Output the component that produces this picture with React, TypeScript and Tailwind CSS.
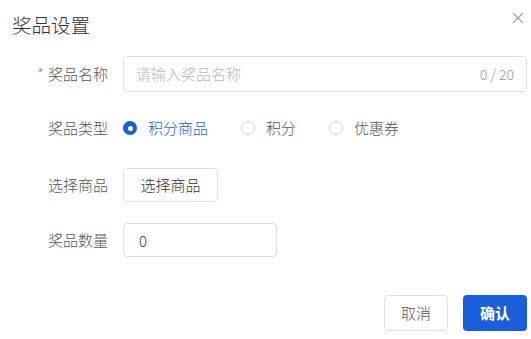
import { useState } from 'react';

const font = { fontFamily: '"Noto Sans CJK SC", "Noto Sans", sans-serif' };

const types = ['积分商品', '积分', '优惠券'];

const Radio = ({ label, checked, onClick }: { label: string; checked: boolean; onClick: () => void }) => (
    <button className="flex items-center mr-[33px]" onClick={onClick}>
        {checked ? (
            <span className="w-[14px] h-[14px] rounded-full bg-[#1a5fd8] flex items-center justify-center">
                <span className="w-[5px] h-[5px] rounded-full bg-white" />
            </span>
        ) : (
            <span className="w-[14px] h-[14px] rounded-full border border-[#cfd3dc] bg-white" />
        )}
        <span className={`ml-[11px] text-[15px] ${checked ? 'text-[#1a5fd8]' : 'text-[#555]'}`}>{label}</span>
    </button>
);

export default function App() {
    const [type, setType] = useState(0);
    return (
        <div className="w-[531px] h-[339px] bg-white relative font-light" style={font}>
            {/* Header */}
            <div className="flex items-center justify-between pl-[12px] pr-[7px] h-[50px]">
                <h1 className="text-[19.5px] text-[#333] leading-none">奖品设置</h1>
                <svg width="12" height="12" viewBox="0 0 12 12" className="mb-[14px]">
                    <path d="M1 1L11 11M11 1L1 11" stroke="#a0a0a0" strokeWidth="1.1" />
                </svg>
            </div>

            {/* Form */}
            <div className="pl-[12px] pr-[4px] mt-[6px]">
                <div className="flex items-center h-[36px]">
                    <label className="w-[98px] pr-[2px] text-right text-[15px] text-[#555]">
                        <span className="text-[#f56c6c] mr-[4px]">*</span>奖品名称
                    </label>
                    <div className="ml-[13px] flex-1 h-[36px] border border-[#dcdfe6] rounded-[4px] flex items-center px-[12px]">
                        <input className="flex-1 outline-none text-[15px] text-[#333] placeholder:text-[#b8b8b8]" placeholder="请输入奖品名称" />
                        <span className="text-[14px] text-[#999]">0 / 20</span>
                    </div>
                </div>

                <div className="flex items-center h-[36px] mt-[18px]">
                    <label className="w-[98px] pr-[2px] text-right text-[15px] text-[#555]">奖品类型</label>
                    <div className="ml-[13px] flex items-center">
                        {types.map((t, i) => (
                            <Radio key={t} label={t} checked={type === i} onClick={() => setType(i)} />
                        ))}
                    </div>
                </div>

                <div className="flex items-center h-[34px] mt-[22px]">
                    <label className="w-[98px] pr-[2px] text-right text-[15px] text-[#555]">选择商品</label>
                    <button className="ml-[13px] w-[95px] h-[34px] border border-[#dcdfe6] rounded-[4px] text-[15px] text-[#333]">
                        选择商品
                    </button>
                </div>

                <div className="flex items-center h-[34px] mt-[21px]">
                    <label className="w-[98px] pr-[2px] text-right text-[15px] text-[#555]">奖品数量</label>
                    <input
                        className="ml-[13px] w-[154px] h-[34px] border border-[#dcdfe6] rounded-[4px] px-[15px] text-[15px] text-[#333] outline-none"
                        defaultValue="0"
                    />
                </div>
            </div>

            {/* Footer */}
            <div className="flex justify-end gap-[15px] pr-[4px] mt-[38px]">
                <button className="w-[64px] h-[36px] border border-[#dcdfe6] rounded-[4px] text-[15px] text-[#555] bg-white">取消</button>
                <button className="w-[64px] h-[36px] rounded-[4px] text-[15px] text-white bg-[#1a5fd8] font-bold">确认</button>
            </div>
        </div>
    );
}
